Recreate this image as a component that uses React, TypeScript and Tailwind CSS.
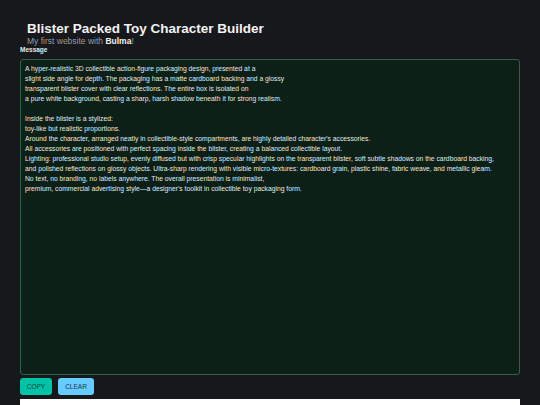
import React from "react";

const text = `A hyper-realistic 3D collectible action-figure packaging design, presented at a
slight side angle for depth. The packaging has a matte cardboard backing and a glossy
transparent blister cover with clear reflections. The entire box is isolated on
a pure white background, casting a sharp, harsh shadow beneath it for strong realism.

Inside the blister is a stylized:
toy-like but realistic proportions.
Around the character, arranged neatly in collectible-style compartments, are highly detailed character's accessories.
All accessories are positioned with perfect spacing inside the blister, creating a balanced collectible layout.
Lighting: professional studio setup, evenly diffused but with crisp specular highlights on the transparent blister, soft subtle shadows on the cardboard backing,
and polished reflections on glossy objects. Ultra-sharp rendering with visible micro-textures: cardboard grain, plastic shine, fabric weave, and metallic gleam.
No text, no branding, no labels anywhere. The overall presentation is minimalist,
premium, commercial advertising style—a designer's toolkit in collectible toy packaging form.`;

export default function App() {
  return (
    <div
      className="w-[540px] h-[405px] overflow-hidden bg-[#17181c] text-[#e8e8e8]"
      style={{ fontFamily: '"Liberation Sans", Arial, sans-serif' }}
    >
      <div className="pt-[21px] pl-[27px]">
        <h1 className="text-[13.5px] font-bold leading-[15px] text-[#f2f2f2]">
          Blister Packed Toy Character Builder
        </h1>
        <p className="text-[8.5px] leading-[10px] text-[#9a9a9a]">
          My first website with <b className="text-[#f2f2f2]">Bulma</b>!
        </p>
      </div>
      <div className="px-[20px]">
        <label className="block text-[6.5px] font-bold leading-[8px] text-[#e8e8e8]">Message</label>
        <textarea
          readOnly
          value={text}
          className="mt-[5px] block w-[500px] h-[316px] resize-none rounded-[3px] border border-[#2f6047] bg-[#0c2018] px-[4px] py-[4px] text-[6.75px] leading-[10px] text-[#e4eae6] outline-none"
          style={{ fontFamily: '"Liberation Sans", Arial, sans-serif' }}
        />
        <div className="mt-[3px] flex gap-[6px]">
          <button className="h-[17px] w-[32px] rounded-[3px] bg-[#00c4a7] text-[6.5px] text-[#0d3b35]">COPY</button>
          <button className="h-[17px] w-[36px] rounded-[3px] bg-[#66ccff] text-[6.5px] text-[#123a55]">CLEAR</button>
        </div>
        <div className="mt-[4px] h-[20px] w-[500px] bg-white" />
      </div>
    </div>
  );
}
